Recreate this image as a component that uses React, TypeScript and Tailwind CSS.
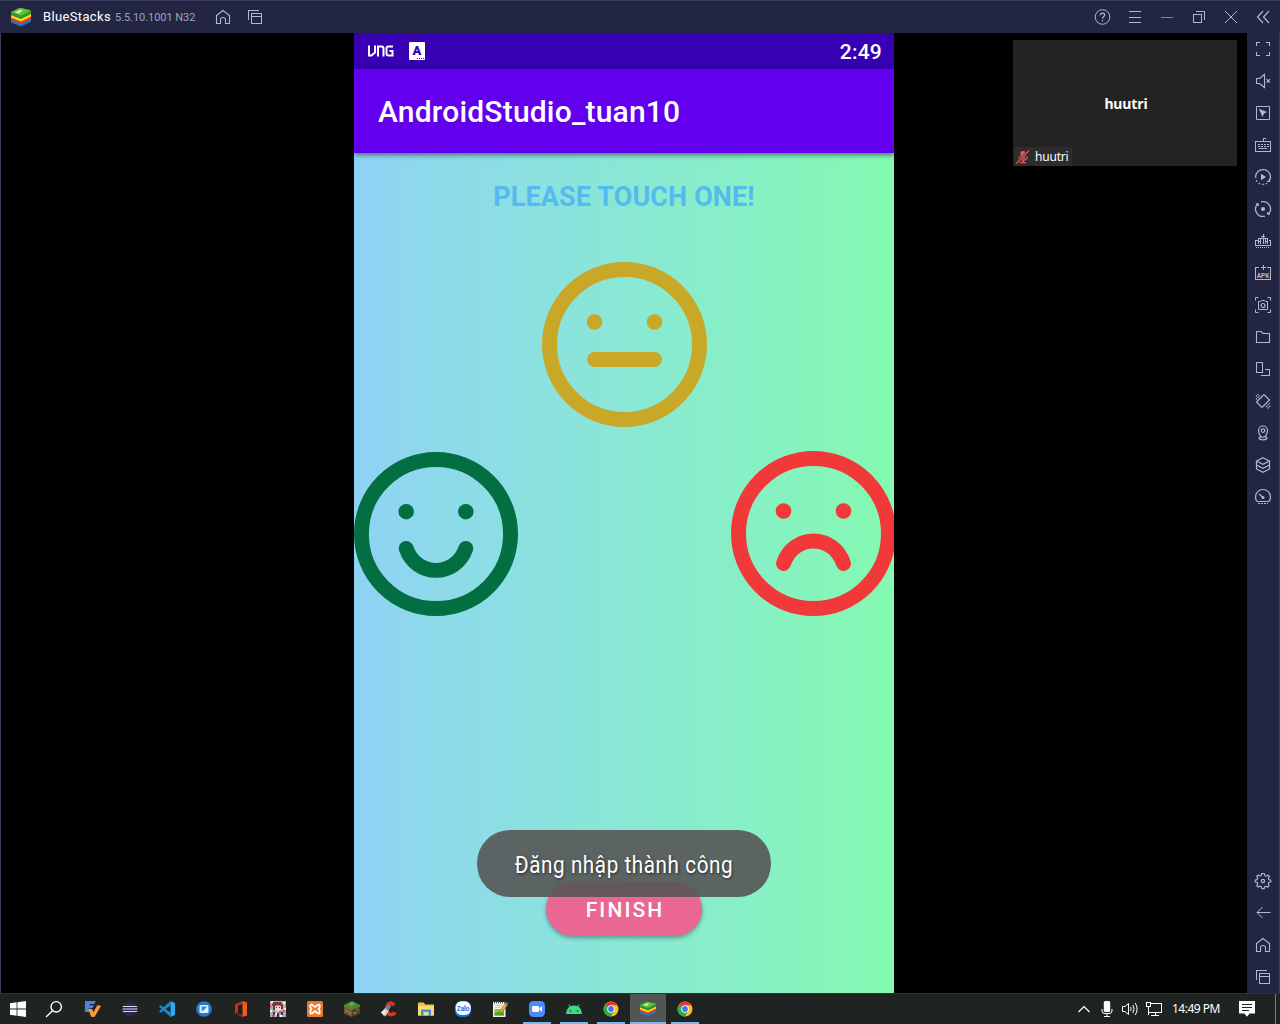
import React from "react";
import type { ReactNode } from "react";

type IconProps = { children: ReactNode; crisp?: boolean };

/* 20x20 line icon used by the emulator window */
function Line({ children, crisp = true }: IconProps) {
  return (
    <svg
      viewBox="0 0 20 20"
      className="block h-5 w-5 shrink-0"
      fill="none"
      stroke="#b4b6d0"
      strokeWidth="1"
      shapeRendering={crisp ? "crispEdges" : "auto"}
    >
      {children}
    </svg>
  );
}

const HomeIcon = () => (
  <Line crisp={false}>
    <path strokeWidth="1.1" d="M3.5 8.5 L10 3.5 L16.5 8.5 V16.5 H12.5 V12.5 Q12.5 10.5 10 10.5 Q7.5 10.5 7.5 12.5 V16.5 H3.5 Z" />
  </Line>
);
const WindowsIcon = () => (
  <Line>
    <path d="M3.5 13 V3.5 H14" />
    <path d="M6.5 6.5 H16.5 V16.5 H6.5 Z M6.5 9.5 H16.5" />
  </Line>
);

function BlueStacksLogo({ className }: { className: string }) {
  return (
    <svg viewBox="0 0 22 20" className={className}>
      <path d="M1 12 L11 16.5 L21 11 V14.5 L11 19.5 L1 15.5Z" fill="#1979c4" />
      <path d="M1 9.5 L11 14 L21 8.5 V12 L11 17 L1 13Z" fill="#e23a2b" />
      <path d="M1 7 L11 11.5 L21 6.5 V9.5 L11 14.5 L1 10.5Z" fill="#ffd91a" />
      <path d="M1 5 L10 .8 L21 3.5 V7 L11 12 L1 8.2Z" fill="#2f9a2c" />
      <path d="M1 5 L10 .8 L21 3.5 L11 8.8Z" fill="#62c22f" />
      <path d="M5 5.4 L9 3.2 L13 3 L9 6.4Z" fill="#d9f3c4" />
    </svg>
  );
}

function TitleBar() {
  return (
    <header className="flex h-[33px] shrink-0 items-center border-t border-[#3a3d5e] bg-[#232642]">
      <BlueStacksLogo className="ml-[10px] h-5 w-[22px]" />
      <span className="ml-[11px] w-[72px] whitespace-nowrap text-[13px] leading-4 tracking-[0.35px] text-white">
        BlueStacks
      </span>
      <span className="w-[98px] whitespace-nowrap pt-px text-[11px] leading-4 tracking-[-0.05px] text-[#a0a2bd]">
        5.5.10.1001 N32
      </span>
      <HomeIcon />
      <div className="ml-3">
        <WindowsIcon />
      </div>
      <div className="ml-auto mr-[7px] flex gap-3">
        <Line crisp={false}>
          <circle cx="9.5" cy="10" r="7.3" />
          <path strokeWidth="1.2" d="M7.3 8.3 Q7.3 6.2 9.5 6.2 Q11.7 6.2 11.7 8 Q11.7 9 10.5 9.7 Q9.5 10.3 9.5 11.8 M9.5 13 V14.2" />
        </Line>
        <Line>
          <path d="M4 4.5 H16 M4 10.5 H16 M4 15.5 H16" />
        </Line>
        <Line>
          <path d="M4 10.5 H16" stroke="#8688a6" />
        </Line>
        <Line>
          <path d="M4.5 7.5 H12.5 V15.5 H4.5 Z M7 4.5 H15.5 V13" />
        </Line>
        <Line crisp={false}>
          <path d="M4 4 L16 16 M16 4 L4 16" />
        </Line>
        <Line crisp={false}>
          <path strokeWidth="1.2" d="M10 4 L4.5 10 L10 16 M16 4 L10.5 10 L16 16" />
        </Line>
      </div>
    </header>
  );
}

const tools: ReactNode[] = [
  <Line>
    <path d="M3.5 7 V3.5 H7 M13 3.5 H16.5 V7 M16.5 13 V16.5 H13 M7 16.5 H3.5 V13" />
  </Line>,
  <Line crisp={false}>
    <path strokeWidth="1.1" d="M3.5 7.5 H6.5 L11.5 3.5 V16.5 L6.5 12.5 H3.5 Z M13.5 8.2 L17 11.7 M17 8.2 L13.5 11.7" />
  </Line>,
  <Line crisp={false}>
    <path d="M3.5 3.5 H16.5 V16.5 H3.5 Z" />
    <path d="M5.8 5.8 L14 9 L11 10.5 L9.5 14 Z" fill="#b4b6d0" stroke="none" />
  </Line>,
  <Line>
    <path d="M2.5 6.5 H17.5 V16.5 H2.5 Z M10.5 6 V3.5 H13" />
    <path d="M5 9.5 H15.5 M5 11.5 H15.5" strokeDasharray="2 1" />
    <path d="M6 13.5 H14" />
  </Line>,
  <Line crisp={false}>
    <path strokeWidth="1.2" d="M2.7 11 A7.4 7.4 0 1 1 16.3 13.9 M16.5 11.5 V14.3 H14" />
    <path strokeWidth="1.3" d="M14 16.2 A7.4 7.4 0 0 1 3.2 13" strokeDasharray="1.6 2" />
    <path d="M8 6.8 L13 10 L8 13.2 Z" fill="#b4b6d0" stroke="none" />
  </Line>,
  <Line crisp={false}>
    <path strokeWidth="1.2" d="M12 17.1 A7.4 7.4 0 0 1 4.6 4.9 M3 4.9 H5.3 V7 M8 2.9 A7.4 7.4 0 0 1 15.4 15.1 M17 15.1 H14.7 V13" />
    <circle cx="10" cy="10" r="2.1" fill="#b4b6d0" stroke="none" />
  </Line>,
  <Line>
    <path d="M5 9.5 H2.5 V14.5 H17.5 V9.5 H15.5 M10 3 V7 M8 5.5 H12 M5.5 13 V7.5 H14.5 V13 M7.5 8 V13 M10 8 V13 M12.5 8 V13 M5.5 10.5 H8 M12 10.5 H15" />
    <path d="M3 16.5 H17" strokeDasharray="1 1" />
  </Line>,
  <Line>
    <path d="M6 4.5 H2.5 V16.5 H17.5 V4.5 H14 M10 2 V7 M7.5 4.5 H12.5" />
    <text x="10" y="14.6" textAnchor="middle" fill="#b4b6d0" stroke="none" fontSize="7" fontWeight="700" fontFamily="Roboto, sans-serif" textLength="12.5" lengthAdjust="spacingAndGlyphs">APK</text>
  </Line>,
  <Line crisp={false}>
    <path d="M2.5 5.5 V2.5 H5.5 M14.5 2.5 H17.5 V5.5 M17.5 14.5 V17.5 H14.5 M5.5 17.5 H2.5 V14.5 M5.5 6.5 H7.5 L8.3 5.5 H11.7 L12.5 6.5 H14.5 V14.5 H5.5 Z" />
    <circle cx="10" cy="10.5" r="2" strokeWidth="1.2" />
  </Line>,
  <Line crisp={false}>
    <path strokeWidth="1.1" d="M3.5 15.5 V4.5 H8 L10 6.5 H16.5 V15.5 Z" />
  </Line>,
  <Line>
    <path d="M3.5 3.5 H9.5 V13.5 H3.5 Z M12 10.5 H16.5 V16.5 H7.5" />
  </Line>,
  <Line crisp={false}>
    <path strokeWidth="1.1" d="M3.5 11 L10.5 4 Q11 3.5 11.5 4 L16.5 9 L9.5 16 Q9 16.5 8.5 16 Z" />
    <path strokeDasharray="1.6 .8" strokeWidth="1.1" d="M3 5.5 L5.5 3 M3 8.5 L7 4.5 M13 16 L17 12 M14.5 17.5 L17.5 14.5" />
  </Line>,
  <Line crisp={false}>
    <path strokeWidth="1.2" d="M8 13.5 Q5.5 11 5.5 7.5 A4.5 4.5 0 0 1 14.5 7.5 Q14.5 11 12 13.5 Q10 15 8 13.5 M7.5 13.5 L6 15 Q6.5 16.8 10 16.8 Q13.5 16.8 14 15 L12.5 13.5" />
    <circle cx="10" cy="7.6" r="1.8" strokeWidth="1.2" />
  </Line>,
  <Line crisp={false}>
    <path strokeWidth="1.2" d="M10 2.7 L16.5 6 L10 9.3 L3.5 6 Z M3.5 6 V14 L10 17.3 L16.5 14 V6 M3.5 10 L10 13.3 L16.5 10" />
  </Line>,
  <Line crisp={false}>
    <path strokeWidth="1.2" d="M4 14.5 Q2.5 12.5 2.5 10 A7.5 7.5 0 0 1 17.5 10 Q17.5 12.5 16 14.5 H4 M6 7 L9.5 10" />
    <circle cx="10" cy="10.5" r="1.5" fill="#b4b6d0" stroke="none" />
    <path d="M5 16.5 H15" strokeDasharray="2 1" />
  </Line>,
];

const navTools: ReactNode[] = [
  <Line crisp={false}>
    <path
      strokeLinejoin="round"
      strokeWidth="1.15"
      d="M8.7 2.5 H11.3 L11.8 4.6 L13.4 5.2 L15.2 4 L16.5 5.7 L15.3 7.4 L15.8 8.7 L17.8 9 V11 L15.8 11.5 L15.2 13 L16.2 14.7 L14.6 16.2 L12.9 15.2 L11.6 15.7 L11.2 17.6 H8.8 L8.3 15.7 L7 15.1 L5.2 16.2 L3.7 14.6 L4.8 13 L4.2 11.5 L2.3 11 V9 L4.2 8.6 L4.8 7.2 L3.7 5.5 L5.2 4 L7 5 L8.2 4.6 Z"
    />
    <circle cx="10" cy="10" r="1.6" strokeWidth="1.2" />
  </Line>,
  <Line crisp={false}>
    <path d="M17.5 9.5 H4 M9.5 4 L4 9.5 L9.5 15" />
  </Line>,
  <HomeIcon />,
  <WindowsIcon />,
];

function SideBar() {
  return (
    <aside className="flex w-8 shrink-0 flex-col justify-between bg-[#232642]">
      <div>
        {tools.map((tool, i) => (
          <div key={i} className="flex h-8 items-center pl-1.5">{tool}</div>
        ))}
      </div>
      <div>
        {navTools.map((tool, i) => (
          <div key={i} className="flex h-8 items-center pl-1.5">{tool}</div>
        ))}
      </div>
    </aside>
  );
}

function Face({ color, mouth, className }: { color: string; mouth: string; className: string }) {
  return (
    <svg viewBox="0 0 165 165" className={className} fill="none" stroke={color} strokeWidth="15" strokeLinecap="round">
      <circle cx="82.5" cy="82.5" r="75" />
      <circle cx="52.5" cy="60" r="7.8" fill={color} stroke="none" />
      <circle cx="112.5" cy="60" r="7.8" fill={color} stroke="none" />
      <path d={mouth} />
    </svg>
  );
}

function Phone() {
  return (
    <main className="relative flex w-[540px] shrink-0 flex-col overflow-hidden bg-linear-to-r from-[#8fd3f4] to-[#84fab0] font-[Roboto,sans-serif]">
      <div className="flex h-9 shrink-0 items-center bg-[#3700b3] pl-[14px] pr-3">
        <svg viewBox="0 0 26 12" className="block h-3 w-[26px]" fill="none" stroke="#fff" strokeWidth="2">
          <path d="M1 .5 V10.5 H3.5 L7 7.5 V.5 M10 11.5 V1.5 H13.5 Q15.5 1.5 15.5 3.5 V11.5 M25 1.5 H20.5 Q18.5 1.5 18.5 3.5 V8.5 Q18.5 10.5 20.5 10.5 H24.5 V6 H21.5" />
        </svg>
        <div className="relative ml-[15px] flex h-[18px] w-4 items-center justify-center rounded-[1px] bg-white pb-px text-[13px] font-black leading-none text-[#3700b3]">
          A
          <div className="absolute bottom-px right-px w-[7px] border-b border-dotted border-[#3700b3]" />
        </div>
        <span className="ml-auto pt-0.5 text-[21px] font-medium leading-[34px] tracking-[0.2px] text-white">2:49</span>
      </div>
      <div className="z-10 flex h-[84px] shrink-0 items-center bg-[#6200ee] pl-6 pt-0.5 shadow-[0_2px_5px_rgba(0,0,0,0.5)]">
        <h1 className="text-[30px] font-medium leading-9 tracking-[0.19px] text-white">AndroidStudio_tuan10</h1>
      </div>
      <h2 className="mt-7 text-center text-[27px] font-bold leading-8 tracking-[0.12px] text-[#55bbee]">PLEASE TOUCH ONE!</h2>
      <div className="mt-[49px] flex justify-center">
        <Face className="block h-[165px] w-[165px] shrink-0" color="#c9a727" mouth="M52.5 97.5 H112.5" />
      </div>
      <div className="mt-6 flex w-[542px] items-end justify-between">
        <Face className="block h-[164px] w-[164px] shrink-0" color="#026e41" mouth="M52.5 97 C62.5 126.5 102.5 126.5 112.5 97" />
        <Face className="block h-[165px] w-[165px] shrink-0" color="#f13939" mouth="M52.5 112.5 C62.5 82.5 102.5 82.5 112.5 112.5" />
      </div>
      <button className="mx-auto mt-auto mb-[57px] h-[54px] w-[156px] rounded-full bg-[#ea6794] pl-0.5 pt-[3px] text-[21px] font-medium tracking-[2.1px] text-white shadow-[0_2px_4px_rgba(0,0,0,0.35)]">
        FINISH
      </button>
      <div className="absolute left-[123px] top-[797px] z-20 flex h-[67px] w-[294px] items-center justify-center rounded-[33px] bg-[#575555]/90 pt-0.5">
        <span className="scale-x-[0.86] whitespace-nowrap text-[24px] leading-8 tracking-[0.68px] text-white [text-shadow:1px_1px_3px_rgba(0,0,0,0.6)]">
          Đăng nhập thành công
        </span>
      </div>
    </main>
  );
}

function CallTile() {
  return (
    <section className="relative mr-[10px] mt-[7px] flex h-[126px] w-56 items-center justify-center bg-[#232323] font-['Noto_Sans',sans-serif]">
      <span className="pl-0.5 pt-px text-[14px] font-bold leading-5 tracking-[-0.1px] text-white">huutri</span>
      <div className="absolute bottom-0 left-px flex h-[19px] w-[58px] items-center bg-[#2d2d2d] pl-0.5">
        <svg viewBox="0 0 14 14" className="h-[14px] w-[14px] shrink-0" fill="none" stroke="#f0575b">
          <rect x="4.5" y="1" width="5" height="8" rx="2.4" fill="#f0575b" stroke="none" />
          <path strokeWidth="1.3" d="M3 6.5 Q3 10 7.2 10 Q11.2 10 11.2 6.5 M7.2 10 V12.5 M4 12.7 H10" />
          <path d="M.5 13.5 L13 .5" stroke="#2d2d2d" strokeWidth="2.4" />
          <path d="M.5 13.5 L13 .5" strokeWidth="1.2" />
        </svg>
        <span className="ml-[5px] text-[12px] leading-4 tracking-[-0.2px] text-white">huutri</span>
      </div>
    </section>
  );
}

function Chrome() {
  return (
    <>
      <circle cx="9" cy="9" r="7.5" fill="#fbc116" />
      <path d="M9 9 L2.5 5.2 A7.5 7.5 0 0 1 15.5 5.2 H9Z" fill="#e33b2e" />
      <path d="M9 9 L2.5 5.2 A7.5 7.5 0 0 0 8.8 16.5 L12.2 11Z" fill="#2da94f" />
      <circle cx="9" cy="9" r="3.8" fill="#fff" />
      <circle cx="9" cy="9" r="2.9" fill="#3b7de9" />
    </>
  );
}

type TaskApp = { art: ReactNode; running?: boolean; active?: boolean };

const apps: TaskApp[] = [
  {
    art: (
      <>
        <path d="M1 1 H11.5 L10.5 4 H5.8 L5.4 5.3 H9.8 L8.8 8 H4.6 L4.2 9.3 H8.2 L7.2 12 H.8Z" fill="#4e82e8" />
        <path d="M4 8.5 L8 9 L9.5 12 L13.5 5 L17 6 L10.5 17 L7.2 16.8Z" fill="#f39c3d" />
      </>
    ),
  },
  {
    art: (
      <>
        <circle cx="9" cy="9" r="7.4" fill="#2e2455" />
        <path d="M1.8 6.5 H16.2 M1.5 9 H16.5 M1.8 11.5 H16.2" stroke="#dedbe9" strokeWidth="1.2" />
      </>
    ),
  },
  {
    art: (
      <>
        <path d="M12.5 1 L17 3 V15 L12.5 17Z" fill="#2daaf2" />
        <path d="M12.5 1 L1 11.2 L2.7 12.7 L12.5 5.5 V12.5 L2.7 5.3 L1 6.8 L12.5 17Z" fill="#1687cf" />
      </>
    ),
  },
  {
    art: (
      <>
        <circle cx="9" cy="9" r="7.8" fill="#2678cf" />
        <rect x="4.5" y="5" width="9" height="8" rx="1.5" fill="#e2f1ff" />
        <path d="M6.5 6.5 H12 L9.8 9.3 L6.5 11.5Z" fill="#3c8bdb" />
      </>
    ),
  },
  {
    art: (
      <>
        <path d="M3 4.5 L10.5 1 V4 L6 5.3 V12.5 L3 13.8Z" fill="#c4301b" />
        <path d="M10.5 1 L15 2.5 V15.5 L10.5 17Z" fill="#ee5a22" />
        <path d="M3.5 14 L10.5 14.8 V17Z" fill="#a52718" />
      </>
    ),
  },
  {
    art: (
      <>
        <rect x="1" y="1" width="16" height="16" fill="#b9aab8" />
        <path d="M4 2 H12 L14 5 V9 H12 V6 L9 5 L6 6 V10 H4 V6 H3Z" fill="#7c3440" />
        <path d="M6 6 H12 V10 L9 12 L6 10Z" fill="#f0d4cc" />
        <path d="M7 7 H8 V8 H7Z M10 7 H11 V8 H10Z M4 12 H6 V15 H4Z M12 12 H14 V15 H12Z M8 13 H10 V17 H8Z" fill="#2f364c" />
        <path d="M2 1 H4 V3 H2Z M14 2 H16 V4 H14Z M6 13 H8 V15 H6Z M11 15 H13 V17 H11Z M15 8 H17 V10 H15Z M1 10 H3 V12 H1Z" fill="#fbf5f2" />
        <path d="M1 5 H2 V8 H1Z M14 10 H16 V12 H14Z M3 15 H5 V17 H3Z M10 11 H12 V13 H10Z M12 2 H13 V4 H12Z" fill="#d8484f" />
        <path d="M1 14 H2 V16 H1Z M16 13 H17 V16 H16Z M5 10 H6 V12 H5Z" fill="#59b9d8" />
      </>
    ),
  },
  {
    art: (
      <>
        <rect x="1" y="1" width="16" height="16" rx="1.5" fill="#ee7829" />
        <path d="M5.5 4.5 L9 7 L12.5 4.5 Q14.5 5 13.5 7.5 L12.5 9 L13.5 10.5 Q14.5 13.5 12 13.5 L9 11 L6 13.5 Q3.5 13.5 4.5 10.5 L5.5 9 L4.5 7.5 Q3.5 5 5.5 4.5Z" fill="none" stroke="#fff" strokeWidth="1.8" />
      </>
    ),
  },
  {
    art: (
      <>
        <path d="M1 5 L9 9 V17 L1 13.5Z" fill="#7d5638" />
        <path d="M17 5 L9 9 V17 L17 13.5Z" fill="#5a3e29" />
        <path d="M1 5 L9 1 L17 5 V7 L15 7 L13 9 L11 8.5 L9 10.5 L7 9 L5 9 L3 7 L1 7Z" fill="#4c873b" />
        <path d="M5 4 L9 2 L12 4 L8 6Z" fill="#6aa651" />
        <path d="M3 10 H5 V12 H3Z M6 12 H8 V14 H6Z M11 12 H13 V14 H11Z M14 9 H15 V11 H14Z" fill="#a17855" />
      </>
    ),
  },
  {
    art: (
      <>
        <path d="M15.5 5 Q14 1 10.5 1.2 Q5 2 5 9 Q5 16 11 16.5 Q15 16.5 16.5 13 L13 11.5 Q11.5 13.5 10 12.5 Q8.5 11 9 8 Q10 4.5 12.5 6Z" fill="#d63327" />
        <path d="M1 12.5 L5.5 7.5 L9 10.5 L5.5 16.5Z" fill="#e8c9a4" />
        <path d="M5 8 L9 4.5 L11 6.5 L8 10.5Z" fill="#4c8fc7" />
        <path d="M1 12 L6 10 L4 16Z" fill="#f5eee1" />
      </>
    ),
  },
  {
    art: (
      <>
        <path d="M1 2.5 H7 L8 4.5 H17 V15.5 H1Z" fill="#f5bd43" />
        <path d="M1 6 H17 V15.5 H1Z" fill="#ffdc73" />
        <path d="M4 16 V9.5 H14 V16 H11.5 V12 H6.5 V16Z" fill="#3e96da" />
      </>
    ),
  },
  {
    art: (
      <>
        <rect x="1" y="1" width="16" height="16" rx="6" fill="#1472e8" />
        <rect x="1.6" y="1.2" width="15.2" height="13.8" rx="6" fill="#f7fbff" />
        <text x="9.1" y="10.6" textAnchor="middle" fontSize="6.4" fontWeight="700" fill="#1472e8" fontFamily="Roboto, sans-serif">Zalo</text>
      </>
    ),
  },
  {
    art: (
      <>
        <path d="M2 2 H14.5 V17 H2Z" fill="#f4f4e9" />
        <path d="M3.5 9 H13 V15.5 H3.5Z" fill="#83c83a" />
        <path d="M3.5 12.5 H13 V15.5 H3.5Z" fill="#4fa52a" />
        <path d="M3 2.5 H14" stroke="#555" strokeWidth="2" strokeDasharray="1 1" />
        <path d="M4 5.5 H12 M4 7.5 H10" stroke="#bbb" strokeWidth=".8" />
        <path d="M8 14 L9 11 L14.5 3.5 L16.5 5 L11 12.5Z" fill="#f0b728" stroke="#715216" strokeWidth=".6" />
        <path d="M14.5 3.5 L16 2 L17.5 3.5 L16.5 5Z" fill="#d83b39" />
      </>
    ),
  },
  {
    running: true,
    art: (
      <>
        <rect x="1" y="1" width="16" height="16" rx="4.5" fill="#4a8cff" />
        <rect x="4" y="6" width="7" height="6" rx="1.3" fill="#fff" />
        <path d="M11.6 8 L14 6.2 V11.8 L11.6 10Z" fill="#fff" />
      </>
    ),
  },
  {
    running: true,
    art: (
      <>
        <path d="M1 14 Q1.5 5.5 9 5.5 Q16.5 5.5 17 14Z" fill="#3ddc84" />
        <path d="M5.5 7.5 L3.8 4.3 M12.5 7.5 L14.2 4.3" stroke="#3ddc84" strokeWidth=".9" />
        <circle cx="5.4" cy="11" r=".8" fill="#1f2523" />
        <circle cx="12.6" cy="11" r=".8" fill="#1f2523" />
      </>
    ),
  },
  { running: true, art: <Chrome /> },
  { running: true, active: true, art: null },
  { running: true, art: <Chrome /> },
];

function TaskBar() {
  return (
    <footer className="flex h-[31px] shrink-0 border-t border-[#2c2e4b] bg-[#1f2423]">
      <div className="flex w-9 items-center justify-center">
        <svg viewBox="0 0 16 16" className="h-4 w-4" fill="#fff">
          <path d="M0 2.3 L6.6 1.3 V7.6 H0Z M7.4 1.2 L16 0 V7.6 H7.4Z M0 8.4 H6.6 V14.7 L0 13.7Z M7.4 8.4 H16 V16 L7.4 14.8Z" />
        </svg>
      </div>
      <div className="flex w-[38px] items-center justify-center pr-0.5">
        <svg viewBox="0 0 18 18" className="h-[18px] w-[18px]" fill="none" stroke="#fff" strokeWidth="1.4">
          <circle cx="11.2" cy="6.8" r="5.2" />
          <path d="M7.5 10.7 L1 17" />
        </svg>
      </div>
      {apps.map((app, i) => (
        <div key={i} className="flex w-[37px] justify-center">
          <div className={app.active ? "flex w-9 flex-col items-center bg-[#515655]" : "flex w-9 flex-col items-center"}>
            {app.active ? (
              <BlueStacksLogo className="mt-[7px] block h-4 w-[18px]" />
            ) : (
              <svg viewBox="0 0 18 18" className="mt-1.5 block h-[18px] w-[18px]">{app.art}</svg>
            )}
            {app.running && (
              <div className={app.active ? "mt-auto h-0.5 w-full bg-[#76b9ed]" : "mt-auto h-0.5 w-7 bg-[#76b9ed]"} />
            )}
          </div>
        </div>
      ))}
      <div className="ml-auto flex items-center">
        <svg viewBox="0 0 14 10" className="h-[10px] w-[14px]" fill="none" stroke="#fff" strokeWidth="1.2">
          <path d="M1.5 8 L7 2.5 L12.5 8" />
        </svg>
        <svg viewBox="0 0 12 18" className="ml-[10px] h-[18px] w-3" fill="none" stroke="#fff">
          <rect x="2.8" y="1" width="6.4" height="11" rx="1.5" fill="#fff" stroke="none" />
          <path d="M1 9 V11 Q1 13.5 4 13.5 H8 Q11 13.5 11 11 V9 M6 13.5 V16 M3 16.5 H9" />
        </svg>
        <svg viewBox="0 0 18 18" className="ml-2 h-[18px] w-[18px]" fill="none" stroke="#fff" strokeWidth="1">
          <path d="M1.5 6.5 H4 L7.5 3.5 V14.5 L4 11.5 H1.5Z M9.5 7 Q11 9 9.5 11 M11.8 5 Q14.5 9 11.8 13 M14.2 3 Q18 9 14.2 15" />
        </svg>
        <svg viewBox="0 0 18 18" className="ml-1.5 h-[18px] w-[18px]" fill="none" stroke="#fff" shapeRendering="crispEdges">
          <path d="M1.5 2.5 H5.5 V6.5 H1.5Z M6 3.5 H16.5 V12.5 H4 M3.5 7 V15 M10.5 13 V15.5 M6 15.5 H14" />
        </svg>
        <span className="ml-[9px] w-[52px] whitespace-nowrap font-['Noto_Sans',sans-serif] text-[12px] leading-4 tracking-[-0.5px] text-white">
          14:49 PM
        </span>
        <svg viewBox="0 0 16 16" className="ml-[15px] mr-5 h-4 w-4">
          <path d="M0 0 H16 V12.5 H10.5 L8 15.8 L5.5 12.5 H0Z" fill="#fff" />
          <path d="M3 3.5 H13 M3 6.5 H13 M3 9.5 H10" stroke="#1f2423" />
        </svg>
        <div className="mr-1 h-[30px] w-px bg-[#777b7b]" />
      </div>
    </footer>
  );
}

export default function App() {
  return (
    <div className="flex h-[1024px] w-[1280px] flex-col overflow-hidden bg-black font-[Roboto,sans-serif]">
      <TitleBar />
      <div className="flex h-[960px] shrink-0 border-x border-[#3a3d5e]">
        <div className="w-[353px] shrink-0" />
        <Phone />
        <div className="flex flex-1 justify-end">
          <CallTile />
        </div>
        <SideBar />
      </div>
      <TaskBar />
    </div>
  );
}
